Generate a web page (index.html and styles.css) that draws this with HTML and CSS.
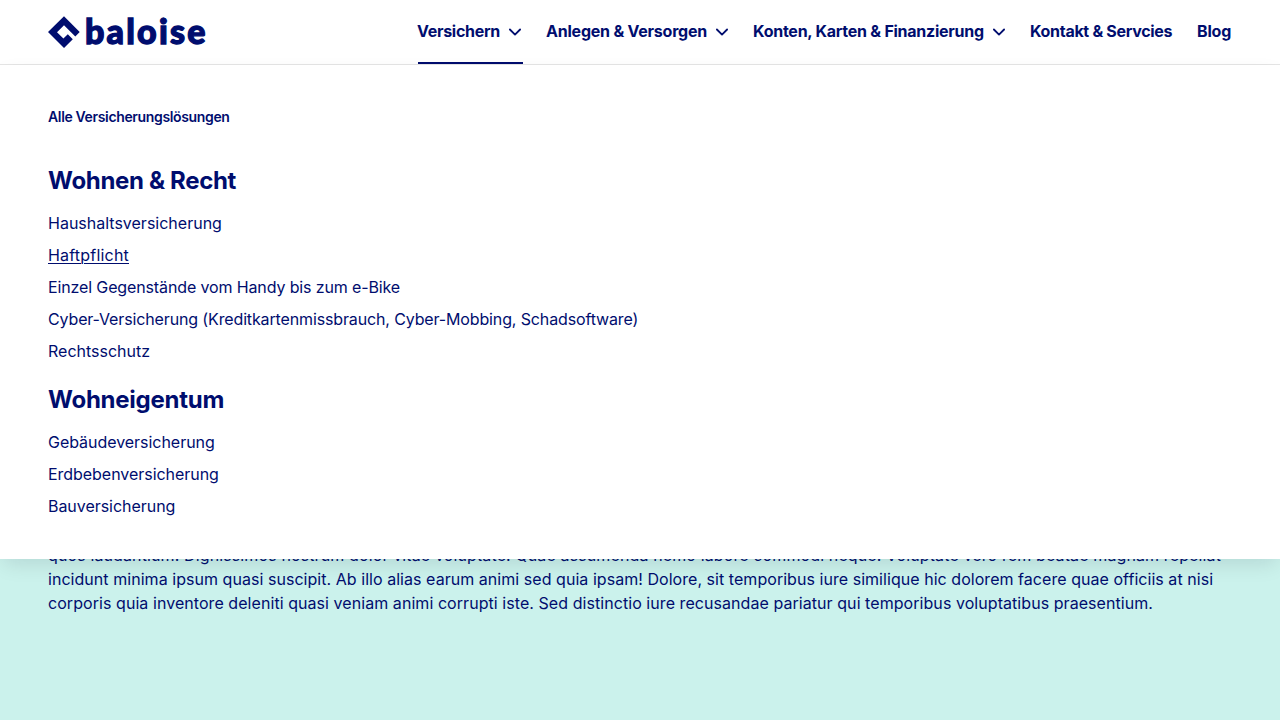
FILE: index.html
```html
<!DOCTYPE html>
<html lang="de">
<head>
<meta charset="utf-8">
<title>Baloise</title>
<link rel="stylesheet" href="styles.css">
</head>
<body>
<header class="header">
  <a class="logo" aria-label="baloise">
    <svg class="logo-mark" width="32" height="32" viewBox="0 0 32 32"><path d="M16 .3 31.7 16 27.3 20.5 16 9.2 9 16.2 15.4 22.6 19.8 18.2 24.8 23.2 16 32 0 16Z"/></svg>
    <span class="logo-text">baloise</span>
  </a>
  <nav class="nav">
    <a class="nav-item nav-active"><span class="w-versichern">Versichern</span><svg class="chevron" viewBox="0 0 14 14"><path d="M1.9 4.5 7 9.6 12.1 4.5"/></svg></a>
    <a class="nav-item"><span class="w-anlegen">Anlegen &amp; Versorgen</span><svg class="chevron" viewBox="0 0 14 14"><path d="M1.9 4.5 7 9.6 12.1 4.5"/></svg></a>
    <a class="nav-item"><span class="w-konten">Konten, Karten &amp; Finanzierung</span><svg class="chevron" viewBox="0 0 14 14"><path d="M1.9 4.5 7 9.6 12.1 4.5"/></svg></a>
    <a class="nav-item"><span class="w-kontakt">Kontakt &amp; Servcies</span></a>
    <a class="nav-item"><span class="w-blog">Blog</span></a>
  </nav>
</header>
<section class="menu">
  <a class="menu-all">Alle Versicherungslösungen</a>
  <h2 class="menu-title">Wohnen &amp; Recht</h2>
  <ul class="menu-list">
    <li>Haushaltsversicherung</li>
    <li><a class="hovered">Haftpflicht</a></li>
    <li class="w-einzel">Einzel Gegenstände vom Handy bis zum e-Bike</li>
    <li class="w-cyber">Cyber-Versicherung (Kreditkartenmissbrauch, Cyber-Mobbing, Schadsoftware)</li>
    <li>Rechtsschutz</li>
  </ul>
  <h2 class="menu-title">Wohneigentum</h2>
  <ul class="menu-list menu-list-tight">
    <li>Gebäudeversicherung</li>
    <li>Erdbebenversicherung</li>
    <li>Bauversicherung</li>
  </ul>
</section>
<main class="content">
  <p class="copy"><span class="line line-a">quos laudantium! Dignissimos nostrum dolor vitae voluptate! Quae assumenda nemo labore commodi neque! Voluptate vero rem beatae magnam repellat</span>
  <span class="line line-b">incidunt minima ipsum quasi suscipit. Ab illo alias earum animi sed quia ipsam! Dolore, sit temporibus iure similique hic dolorem facere quae officiis at nisi</span>
  <span class="line line-c">corporis quia inventore deleniti quasi veniam animi corrupti iste. Sed distinctio iure recusandae pariatur qui temporibus voluptatibus praesentium.</span></p>
</main>
</body>
</html>
```
FILE: styles.css
```css
* { box-sizing: border-box; }
body {
  margin: 0;
  height: 720px;
  overflow: hidden;
  background: #cbf2ec;
  color: #000d6e;
  font: 16px/24px Inter, "Liberation Sans", sans-serif;
}
.header {
  display: flex;
  justify-content: space-between;
  height: 65px;
  padding: 0 48px;
  background: #fff;
  border-bottom: 1px solid #e5e5e5;
}
.logo { display: flex; align-items: center; gap: 5px; height: 64px; }
.logo-mark { display: block; fill: #000d6e; }
.logo-text {
  font: 900 34px/40px Lato, sans-serif;
  letter-spacing: 2.2px;
  -webkit-text-stroke: 1.3px #000d6e;
  margin-top: -3px;
}
.nav { display: flex; gap: 24px; height: 64px; }
.nav-item {
  display: flex;
  align-items: center;
  gap: 8px;
  height: 64px;
  font-weight: 700;
  white-space: nowrap;
  border-bottom: 2px solid transparent;
}
.nav-active {
  background: linear-gradient(#000d6e, #000d6e) 1px 62px / 105px 2px no-repeat border-box;
  padding-right: 1px;
  margin-right: -1px;
}
.chevron { width: 14px; height: 14px; margin-top: 1px; fill: none; stroke: #000d6e; stroke-width: 1.8; stroke-linecap: round; stroke-linejoin: round; }
.w-versichern { width: 83px; letter-spacing: -.28px; }
.w-anlegen { width: 161px; letter-spacing: -.22px; }
.w-konten { width: 231px; letter-spacing: -.25px; }
.w-kontakt { width: 143px; letter-spacing: -.3px; }
.w-blog { width: 35px; letter-spacing: -.2px; }
.menu {
  position: relative;
  z-index: 1;
  height: 494px;
  padding: 40px 48px;
  background: #fff;
  box-shadow: 0 8px 20px -4px rgba(0, 20, 30, .12);
}
.menu-all { display: block; font-size: 14px; font-weight: 600; letter-spacing: -.35px; }
.menu-title { margin: 36px 0 10px; font-size: 24px; line-height: 32px; font-weight: 700; letter-spacing: -.33px; }
.menu-list { margin: 0; padding: 0; list-style: none; line-height: 32px; }
.menu-list + .menu-title { margin-top: 17px; letter-spacing: -.26px; }
.menu-list-tight { letter-spacing: -.04px; }
.hovered { letter-spacing: .2px; text-decoration: underline; text-underline-offset: 2px; text-decoration-thickness: 1px; }
.w-einzel { letter-spacing: -.13px; }
.w-cyber { letter-spacing: -.135px; }
.content { padding: 0 48px; margin-top: -16px; }
.copy { margin: 0; white-space: nowrap; }
.line { display: block; }
.line-a { letter-spacing: .12px; }
.line-b { letter-spacing: .045px; }
.line-c { letter-spacing: .06px; }
```
